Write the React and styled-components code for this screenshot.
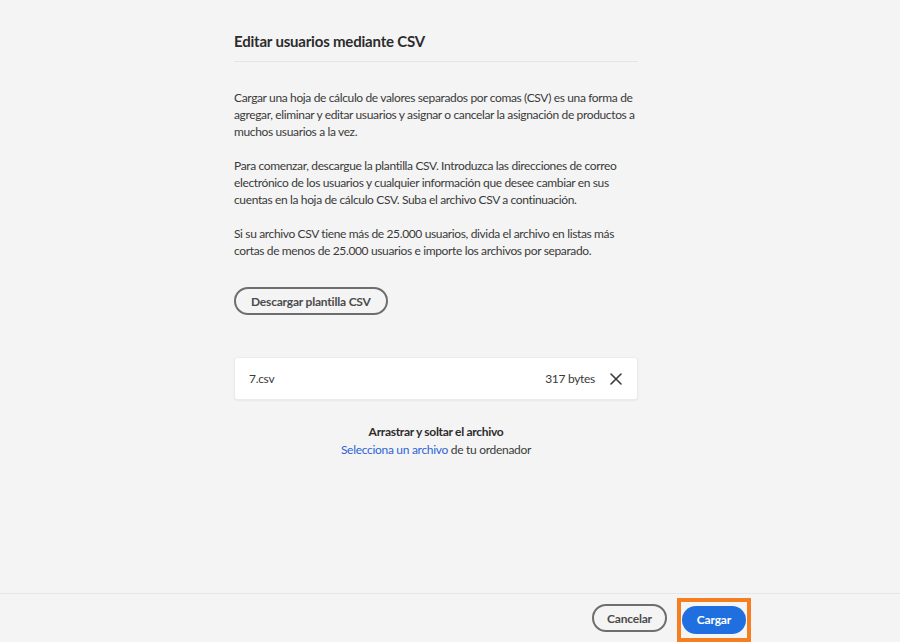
import React from "react";
import styled, { createGlobalStyle } from "styled-components";

const GlobalStyle = createGlobalStyle`
  html, body {
    margin: 0;
    padding: 0;
    background: #f4f4f4;
  }
  body {
    font-family: Lato, "Open Sans", "Liberation Sans", sans-serif;
    color: #2c2c2c;
  }
`;

const Page = styled.div`
  height: 642px;
  display: flex;
  flex-direction: column;
  background: #f4f4f4;
  overflow: hidden;
`;

const Main = styled.main`
  flex: 1;
  display: flex;
  justify-content: center;
  padding-right: 28px;
`;

const Column = styled.section`
  width: 404px;
  display: flex;
  flex-direction: column;
  padding-top: 31px;
`;

const Title = styled.h1`
  margin: 0;
  font-size: 15px;
  font-weight: 700;
  letter-spacing: -0.2px;
  line-height: 20px;
  color: #2c2c2c;
  padding-bottom: 10px;
  border-bottom: 1px solid #e4e4e4;
`;

const Body = styled.div`
  padding-top: 27px;
  display: flex;
  flex-direction: column;
  gap: 17px;
`;

const Para = styled.p`
  margin: 0;
  font-size: 12px;
  letter-spacing: -0.36px;
  line-height: 17px;
  color: #3a3a3a;
`;

const OutlineButton = styled.button`
  font-family: inherit;
  font-size: 12px;
  font-weight: 700;
  letter-spacing: -0.2px;
  color: #4b4b4b;
  background: transparent;
  border: 2px solid #6e6e6e;
  border-radius: 16px;
  height: 28px;
  padding: 0 ${(p) => p.$px || 13}px;
  cursor: pointer;
`;

const DownloadRow = styled.div`
  margin-top: 28px;
  display: flex;
`;

const FileCard = styled.div`
  margin-top: 42px;
  height: 43px;
  background: #ffffff;
  border: 1px solid #ebebeb;
  border-radius: 3px;
  box-shadow: 0 1px 2px rgba(0, 0, 0, 0.05);
  display: flex;
  align-items: center;
  padding: 0 14px;
  box-sizing: border-box;
  font-size: 12px;
  letter-spacing: -0.3px;
  color: #3a3a3a;
`;

const FileName = styled.span`
  flex: 1;
`;

const FileSize = styled.span`
  margin-right: 14px;
`;

const RemoveButton = styled.button`
  border: none;
  background: transparent;
  padding: 0;
  width: 14px;
  height: 14px;
  display: flex;
  align-items: center;
  justify-content: center;
  cursor: pointer;
`;

const DropZone = styled.div`
  margin-top: 23px;
  text-align: center;
  font-size: 12px;
  letter-spacing: -0.3px;
  line-height: 18px;
  color: #3a3a3a;
`;

const DropTitle = styled.div`
  font-weight: 700;
  color: #2c2c2c;
`;

const Link = styled.a`
  color: #2d64d6;
  text-decoration: none;
`;

const Footer = styled.footer`
  height: 48px;
  border-top: 1px solid #e6e6e6;
  display: flex;
  align-items: center;
  justify-content: flex-end;
  gap: 10px;
  padding-right: 149px;
`;

const Highlight = styled.span`
  display: inline-flex;
  border: 4px solid #f57f20;
  padding: 4px 1px;
  margin-top: 3px;
`;

const PrimaryButton = styled.button`
  font-family: inherit;
  font-size: 12px;
  font-weight: 700;
  letter-spacing: -0.2px;
  color: #ffffff;
  background: #1f6fe0;
  border: none;
  border-radius: 14px;
  height: 28px;
  padding: 0 15px;
  cursor: pointer;
`;

const CloseIcon = () => (
  <svg width="12" height="12" viewBox="0 0 12 12" aria-hidden="true">
    <path d="M1 1 L11 11 M11 1 L1 11" stroke="#3a3a3a" strokeWidth="1.6" strokeLinecap="round" />
  </svg>
);

export default function App() {
  return (
    <>
      <GlobalStyle />
      <Page>
        <Main>
          <Column>
            <Title>Editar usuarios mediante CSV</Title>
            <Body>
              <Para>
                Cargar una hoja de cálculo de valores separados por comas (CSV) es una forma de
                agregar, eliminar y editar usuarios y asignar o cancelar la asignación de productos a
                muchos usuarios a la vez.
              </Para>
              <Para>
                Para comenzar, descargue la plantilla CSV. Introduzca las direcciones de correo
                electrónico de los usuarios y cualquier información que desee cambiar en sus
                cuentas en la hoja de cálculo CSV. Suba el archivo CSV a continuación.
              </Para>
              <Para>
                Si su archivo CSV tiene más de 25.000 usuarios, divida el archivo en listas más
                cortas de menos de 25.000 usuarios e importe los archivos por separado.
              </Para>
            </Body>
            <DownloadRow>
              <OutlineButton $px={15}>Descargar plantilla CSV</OutlineButton>
            </DownloadRow>
            <FileCard>
              <FileName>7.csv</FileName>
              <FileSize>317 bytes</FileSize>
              <RemoveButton aria-label="Quitar archivo">
                <CloseIcon />
              </RemoveButton>
            </FileCard>
            <DropZone>
              <DropTitle>Arrastrar y soltar el archivo</DropTitle>
              <div>
                <Link href="#">Selecciona un archivo</Link> de tu ordenador
              </div>
            </DropZone>
          </Column>
        </Main>
        <Footer>
          <OutlineButton $px={13}>Cancelar</OutlineButton>
          <Highlight>
            <PrimaryButton>Cargar</PrimaryButton>
          </Highlight>
        </Footer>
      </Page>
    </>
  );
}
